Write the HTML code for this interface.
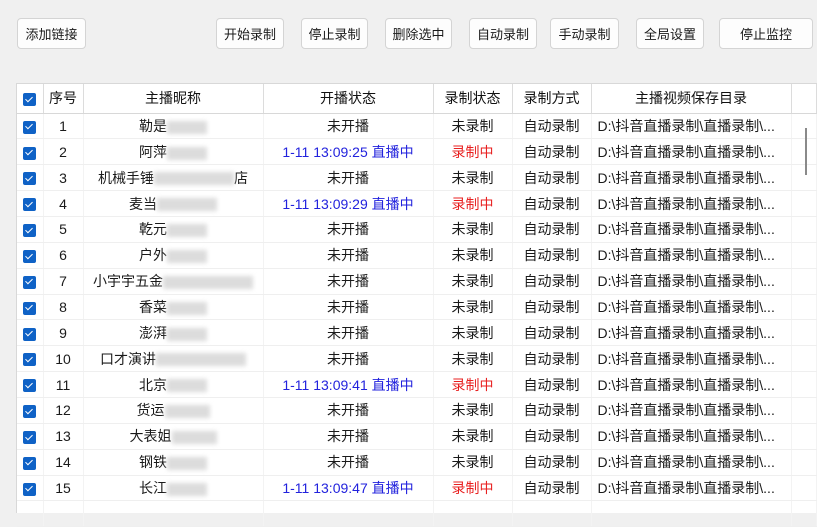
<!DOCTYPE html>
<html><head><meta charset="utf-8"><style>
*{margin:0;padding:0;box-sizing:border-box}
body{width:817px;height:505px;background:#f0f0f0;font-family:"Liberation Sans","Noto Sans CJK SC",sans-serif;font-size:13px;color:#222;position:relative;overflow:hidden}
.b{position:absolute;top:18px;height:31px;background:#fdfdfd;border:1px solid #d4d4d4;border-radius:4px;display:flex;align-items:center;justify-content:center;font-size:13px;color:#1a1a1a}
.t{position:absolute;left:16px;top:83px;width:801px;height:430px;background:#fff;border-top:1px solid #d8d8d8;border-left:1px solid #d8d8d8}
table{border-collapse:collapse;table-layout:fixed;width:800px}
td,th{height:25.86px;text-align:center;white-space:nowrap;overflow:hidden;border-right:1px solid #f3f3f3;border-bottom:1px solid #efefef;font-weight:normal;font-size:14px;padding:0;color:#1a1a1a}
th{height:29px;border-right:1px solid #dcdcdc;border-bottom:1px solid #d8d8d8;color:#111}
.cb{display:inline-block;width:13px;height:13px;background:#0f62c6;border-radius:2px;vertical-align:middle;position:relative}
.cb:after{content:"";position:absolute;left:4px;top:1.5px;width:3px;height:6px;border:solid #fff;border-width:0 1.5px 1.5px 0;transform:rotate(45deg)}
td.bl{color:#2222dd}td.rd{color:#e82020}
.p{text-align:left;padding-left:6px}
.z{display:inline-block;height:13px;background:#dcdcdc;vertical-align:middle;filter:blur(2px)}
.sb{position:absolute;left:805px;top:128px;width:2px;height:47px;background:#8a8a8a}
</style></head><body>
<div class="b" style="left:17px;width:69px">添加链接</div>
<div class="b" style="left:216px;width:68px">开始录制</div>
<div class="b" style="left:301px;width:67px">停止录制</div>
<div class="b" style="left:385px;width:67px">删除选中</div>
<div class="b" style="left:469px;width:68px">自动录制</div>
<div class="b" style="left:550px;width:69px">手动录制</div>
<div class="b" style="left:636px;width:68px">全局设置</div>
<div class="b" style="left:719px;width:94px">停止监控</div>
<div class="t"><table>
<colgroup><col style="width:26px"><col style="width:40px"><col style="width:180px"><col style="width:170px"><col style="width:79px"><col style="width:79px"><col style="width:200px"><col></colgroup>
<tr><th><span class="cb"></span></th><th>序号</th><th>主播昵称</th><th>开播状态</th><th>录制状态</th><th>录制方式</th><th>主播视频保存目录</th><th></th></tr>
<tr><td><span class="cb"></span></td><td>1</td><td>勒是<span class="z" style="width:40px"></span></td><td>未开播</td><td>未录制</td><td>自动录制</td><td class="p">D:\抖音直播录制\直播录制\...</td><td></td></tr>
<tr><td><span class="cb"></span></td><td>2</td><td>阿萍<span class="z" style="width:40px"></span></td><td class="bl">1-11 13:09:25 直播中</td><td class="rd">录制中</td><td>自动录制</td><td class="p">D:\抖音直播录制\直播录制\...</td><td></td></tr>
<tr><td><span class="cb"></span></td><td>3</td><td>机械手锤<span class="z" style="width:80px"></span>店</td><td>未开播</td><td>未录制</td><td>自动录制</td><td class="p">D:\抖音直播录制\直播录制\...</td><td></td></tr>
<tr><td><span class="cb"></span></td><td>4</td><td>麦当<span class="z" style="width:60px"></span></td><td class="bl">1-11 13:09:29 直播中</td><td class="rd">录制中</td><td>自动录制</td><td class="p">D:\抖音直播录制\直播录制\...</td><td></td></tr>
<tr><td><span class="cb"></span></td><td>5</td><td>乾元<span class="z" style="width:40px"></span></td><td>未开播</td><td>未录制</td><td>自动录制</td><td class="p">D:\抖音直播录制\直播录制\...</td><td></td></tr>
<tr><td><span class="cb"></span></td><td>6</td><td>户外<span class="z" style="width:40px"></span></td><td>未开播</td><td>未录制</td><td>自动录制</td><td class="p">D:\抖音直播录制\直播录制\...</td><td></td></tr>
<tr><td><span class="cb"></span></td><td>7</td><td>小宇宇五金<span class="z" style="width:90px"></span></td><td>未开播</td><td>未录制</td><td>自动录制</td><td class="p">D:\抖音直播录制\直播录制\...</td><td></td></tr>
<tr><td><span class="cb"></span></td><td>8</td><td>香菜<span class="z" style="width:40px"></span></td><td>未开播</td><td>未录制</td><td>自动录制</td><td class="p">D:\抖音直播录制\直播录制\...</td><td></td></tr>
<tr><td><span class="cb"></span></td><td>9</td><td>澎湃<span class="z" style="width:40px"></span></td><td>未开播</td><td>未录制</td><td>自动录制</td><td class="p">D:\抖音直播录制\直播录制\...</td><td></td></tr>
<tr><td><span class="cb"></span></td><td>10</td><td>口才演讲<span class="z" style="width:90px"></span></td><td>未开播</td><td>未录制</td><td>自动录制</td><td class="p">D:\抖音直播录制\直播录制\...</td><td></td></tr>
<tr><td><span class="cb"></span></td><td>11</td><td>北京<span class="z" style="width:40px"></span></td><td class="bl">1-11 13:09:41 直播中</td><td class="rd">录制中</td><td>自动录制</td><td class="p">D:\抖音直播录制\直播录制\...</td><td></td></tr>
<tr><td><span class="cb"></span></td><td>12</td><td>货运<span class="z" style="width:45px"></span></td><td>未开播</td><td>未录制</td><td>自动录制</td><td class="p">D:\抖音直播录制\直播录制\...</td><td></td></tr>
<tr><td><span class="cb"></span></td><td>13</td><td>大表姐<span class="z" style="width:45px"></span></td><td>未开播</td><td>未录制</td><td>自动录制</td><td class="p">D:\抖音直播录制\直播录制\...</td><td></td></tr>
<tr><td><span class="cb"></span></td><td>14</td><td>钢铁<span class="z" style="width:40px"></span></td><td>未开播</td><td>未录制</td><td>自动录制</td><td class="p">D:\抖音直播录制\直播录制\...</td><td></td></tr>
<tr><td><span class="cb"></span></td><td>15</td><td>长江<span class="z" style="width:40px"></span></td><td class="bl">1-11 13:09:47 直播中</td><td class="rd">录制中</td><td>自动录制</td><td class="p">D:\抖音直播录制\直播录制\...</td><td></td></tr>
<tr><td></td><td></td><td></td><td></td><td></td><td></td><td></td><td></td></tr>
</table></div>
<div class="sb"></div>
</body></html>
